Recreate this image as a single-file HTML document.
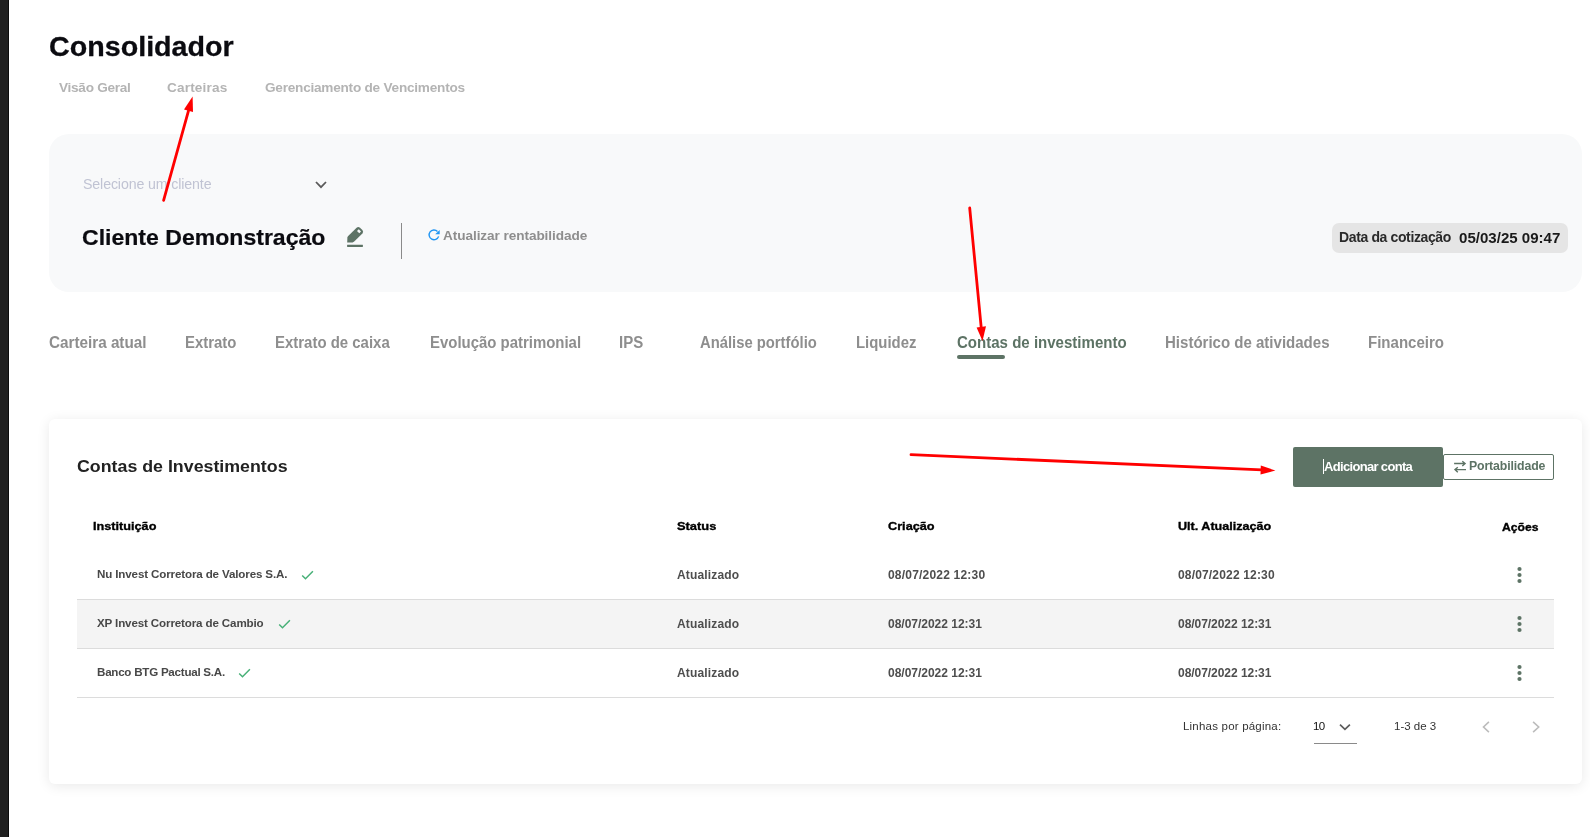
<!DOCTYPE html>
<html lang="pt-BR">
<head>
<meta charset="utf-8">
<title>Consolidador</title>
<style>
html,body{margin:0;padding:0;background:#fff;}
body{width:1590px;height:837px;position:relative;overflow:hidden;font-family:"Liberation Sans",sans-serif;}
.t{position:absolute;white-space:nowrap;font-family:"Liberation Sans",sans-serif;}
.abs{position:absolute;}
</style>
</head>
<body>
<!-- left dark bar -->
<div class="abs" style="left:0;top:0;width:8px;height:837px;background:#202020;"></div>
<div class="abs" style="left:8px;top:0;width:1px;height:837px;background:#0c0c0c;"></div>
<!-- client panel -->
<div class="abs" style="left:49px;top:134px;width:1533px;height:158px;background:#f8f9fa;border-radius:20px;"></div>
<!-- select chevron -->
<svg class="abs" style="left:313px;top:179.4px" width="16" height="12" viewBox="0 0 16 12"><path d="M3 3 L8 8.2 L13 3" fill="none" stroke="#5a5a5a" stroke-width="1.8" stroke-linecap="butt" stroke-linejoin="miter"/></svg>
<!-- pencil -->
<svg class="abs" style="left:340px;top:220px" width="30" height="32" viewBox="0 0 30 32"><path d="M7.2 22.6 L7.4 17.6 Q7.5 16.7 8.2 16 L16.6 7.7 Q18.3 6.2 20 7.7 L22.4 10.1 Q23.9 11.7 22.4 13.4 L14.2 21.6 Q13.5 22.3 12.6 22.4 Z" fill="#5d7365"/><path d="M17 11.1 L18.75 9.2 L21 11.5 L19.3 13.2 Z" fill="#f8f9fa"/><rect x="7.1" y="24.8" width="15.8" height="2.1" rx="0.3" fill="#5d7365"/></svg>
<!-- divider -->
<div class="abs" style="left:401px;top:223px;width:1px;height:36px;background:#8a8a8a;"></div>
<!-- refresh icon -->
<svg class="abs" style="left:427px;top:228px" width="14" height="14" viewBox="0 0 14 14"><path d="M10.5 3.4 A4.9 4.9 0 1 0 11.65 8.4" fill="none" stroke="#2196f3" stroke-width="1.4"/><path d="M12.7 2.1 L12.7 6.3 L8.2 6.3 Z" fill="#2196f3"/></svg>
<!-- date badge -->
<div class="abs" style="left:1332px;top:223px;width:236px;height:30px;background:#e5e5e5;border-radius:7px;"></div>
<!-- active tab underline -->
<div class="abs" style="left:957px;top:355px;width:48px;height:4px;background:#5d7365;border-radius:2px;"></div>
<!-- card -->
<div class="abs" style="left:49px;top:419px;width:1533px;height:365px;background:#fff;border-radius:6px;box-shadow:0 2px 13px rgba(0,0,0,0.09);"></div>
<!-- buttons -->
<div class="abs" style="left:1293px;top:447px;width:150px;height:40px;background:#5d7365;border-radius:2px;"></div>
<div class="abs" style="left:1323px;top:459px;width:1px;height:15px;background:#fff;"></div>
<div class="abs" style="left:1443px;top:454px;width:111px;height:26px;box-sizing:border-box;border:1px solid #5d7365;border-radius:2px;background:#fff;"></div>
<svg class="abs" style="left:1453px;top:460px" width="14" height="14" viewBox="0 0 14 14"><path d="M1.1 3.5 H12.3 M9.3 1.2 L12.1 3.5 L9.3 6" fill="none" stroke="#5d7365" stroke-width="1.4"/><path d="M13 9.6 H1.7 M4.8 7.3 L2 9.6 L4.8 12.2" fill="none" stroke="#5d7365" stroke-width="1.4"/></svg>
<!-- table rows -->
<div class="abs" style="left:77px;top:600px;width:1477px;height:48px;background:#f4f4f4;"></div>
<div class="abs" style="left:77px;top:599px;width:1477px;height:1px;background:#dcdcdc;"></div>
<div class="abs" style="left:77px;top:648px;width:1477px;height:1px;background:#dcdcdc;"></div>
<div class="abs" style="left:77px;top:697px;width:1477px;height:1px;background:#dcdcdc;"></div>
<!-- checks -->
<svg class="abs" style="left:300px;top:568px" width="16" height="14" viewBox="0 0 16 14"><path d="M2.2 7.45 L5.5 10.7 L12.9 3.3" fill="none" stroke="#47b077" stroke-width="1.5"/></svg>
<svg class="abs" style="left:276.8px;top:617px" width="16" height="14" viewBox="0 0 16 14"><path d="M2.2 7.45 L5.5 10.7 L12.9 3.3" fill="none" stroke="#47b077" stroke-width="1.5"/></svg>
<svg class="abs" style="left:237px;top:666px" width="16" height="14" viewBox="0 0 16 14"><path d="M2.2 7.45 L5.5 10.7 L12.9 3.3" fill="none" stroke="#47b077" stroke-width="1.5"/></svg>
<!-- dots -->
<svg class="abs" style="left:1514px;top:565px" width="10" height="20" viewBox="0 0 10 20"><circle cx="5.5" cy="4" r="2.1" fill="#5d7365"/><circle cx="5.5" cy="10" r="2.1" fill="#5d7365"/><circle cx="5.5" cy="16" r="2.1" fill="#5d7365"/></svg>
<svg class="abs" style="left:1514px;top:614px" width="10" height="20" viewBox="0 0 10 20"><circle cx="5.5" cy="4" r="2.1" fill="#5d7365"/><circle cx="5.5" cy="10" r="2.1" fill="#5d7365"/><circle cx="5.5" cy="16" r="2.1" fill="#5d7365"/></svg>
<svg class="abs" style="left:1514px;top:663px" width="10" height="20" viewBox="0 0 10 20"><circle cx="5.5" cy="4" r="2.1" fill="#5d7365"/><circle cx="5.5" cy="10" r="2.1" fill="#5d7365"/><circle cx="5.5" cy="16" r="2.1" fill="#5d7365"/></svg>
<!-- pagination -->
<svg class="abs" style="left:1337px;top:720px" width="16" height="14" viewBox="0 0 16 14"><path d="M3 4.7 L7.95 9.4 L12.9 4.7" fill="none" stroke="#5c5c5c" stroke-width="1.7"/></svg>
<div class="abs" style="left:1314px;top:743px;width:43px;height:1px;background:#8a8a8a;"></div>
<svg class="abs" style="left:1479px;top:719px" width="14" height="16" viewBox="0 0 14 16"><path d="M9.9 2.9 L4.5 8 L9.9 13.1" fill="none" stroke="#bcbcbc" stroke-width="1.6"/></svg>
<svg class="abs" style="left:1529px;top:719px" width="14" height="16" viewBox="0 0 14 16"><path d="M4.1 2.9 L9.7 8 L4.1 13.1" fill="none" stroke="#bcbcbc" stroke-width="1.6"/></svg>

<div id="tx" style="position:absolute;left:0;top:0;width:1590px;height:837px;will-change:transform;">
<span class="t" id="s0" style="left:49.00px;top:32.34px;font-size:28.3px;line-height:28.3px;font-weight:700;color:#0b0b10;letter-spacing:0.000px;-webkit-text-stroke:0.3px #0b0b10;transform:scaleX(1.0129);transform-origin:0 0;">Consolidador</span>
<span class="t" id="s1" style="left:59.00px;top:81.49px;font-size:13.6px;line-height:13.6px;font-weight:700;color:#b4b4b4;letter-spacing:-0.267px;">Visão Geral</span>
<span class="t" id="s2" style="left:167.00px;top:81.49px;font-size:13.6px;line-height:13.6px;font-weight:700;color:#b4b4b4;letter-spacing:0.165px;">Carteiras</span>
<span class="t" id="s3" style="left:265.00px;top:81.49px;font-size:13.6px;line-height:13.6px;font-weight:700;color:#b4b4b4;letter-spacing:-0.229px;">Gerenciamento de Vencimentos</span>
<span class="t" id="s4" style="left:83.00px;top:176.98px;font-size:14.2px;line-height:14.2px;font-weight:400;color:#c0c3d3;letter-spacing:-0.125px;">Selecione um cliente</span>
<span class="t" id="s5" style="left:82.00px;top:227.08px;font-size:22px;line-height:22px;font-weight:700;color:#0b0b10;letter-spacing:0.000px;-webkit-text-stroke:0.2px #0b0b10;transform:scaleX(1.0478);transform-origin:0 0;">Cliente Demonstração</span>
<span class="t" id="s6" style="left:443.00px;top:229.49px;font-size:13.6px;line-height:13.6px;font-weight:700;color:#8e8e8e;letter-spacing:-0.070px;">Atualizar rentabilidade</span>
<span class="t" id="s7" style="left:1339.00px;top:230.45px;font-size:14px;line-height:14px;font-weight:700;color:#2a2a2a;letter-spacing:-0.370px;">Data da cotização</span>
<span class="t" id="s8" style="left:1459.00px;top:231.15px;font-size:14px;line-height:14px;font-weight:700;color:#1a1a1a;letter-spacing:0.000px;transform:scaleX(1.0762);transform-origin:0 0;">05/03/25 09:47</span>
<span class="t" id="s9" style="left:49.00px;top:334.99px;font-size:15.6px;line-height:15.6px;font-weight:700;color:#8e8e8e;letter-spacing:0.000px;transform:scaleX(0.9781);transform-origin:0 0;">Carteira atual</span>
<span class="t" id="s10" style="left:185.00px;top:334.99px;font-size:15.6px;line-height:15.6px;font-weight:700;color:#8e8e8e;letter-spacing:0.000px;transform:scaleX(0.9569);transform-origin:0 0;">Extrato</span>
<span class="t" id="s11" style="left:275.00px;top:334.99px;font-size:15.6px;line-height:15.6px;font-weight:700;color:#8e8e8e;letter-spacing:0.000px;transform:scaleX(0.9590);transform-origin:0 0;">Extrato de caixa</span>
<span class="t" id="s12" style="left:430.00px;top:334.99px;font-size:15.6px;line-height:15.6px;font-weight:700;color:#8e8e8e;letter-spacing:0.000px;transform:scaleX(0.9578);transform-origin:0 0;">Evolução patrimonial</span>
<span class="t" id="s13" style="left:619.00px;top:334.99px;font-size:15.6px;line-height:15.6px;font-weight:700;color:#8e8e8e;letter-spacing:0.000px;transform:scaleX(0.9607);transform-origin:0 0;">IPS</span>
<span class="t" id="s14" style="left:700.00px;top:334.99px;font-size:15.6px;line-height:15.6px;font-weight:700;color:#8e8e8e;letter-spacing:0.000px;transform:scaleX(0.9493);transform-origin:0 0;">Análise portfólio</span>
<span class="t" id="s15" style="left:856.00px;top:334.99px;font-size:15.6px;line-height:15.6px;font-weight:700;color:#8e8e8e;letter-spacing:0.000px;transform:scaleX(0.9556);transform-origin:0 0;">Liquidez</span>
<span class="t" id="s16" style="left:957.00px;top:334.99px;font-size:15.6px;line-height:15.6px;font-weight:700;color:#5d7365;letter-spacing:0.000px;transform:scaleX(0.9645);transform-origin:0 0;">Contas de investimento</span>
<span class="t" id="s17" style="left:1165.00px;top:334.99px;font-size:15.6px;line-height:15.6px;font-weight:700;color:#8e8e8e;letter-spacing:0.000px;transform:scaleX(0.9636);transform-origin:0 0;">Histórico de atividades</span>
<span class="t" id="s18" style="left:1368.00px;top:334.99px;font-size:15.6px;line-height:15.6px;font-weight:700;color:#8e8e8e;letter-spacing:0.000px;transform:scaleX(0.9644);transform-origin:0 0;">Financeiro</span>
<span class="t" id="s19" style="left:77.00px;top:458.46px;font-size:17.3px;line-height:17.3px;font-weight:700;color:#222;letter-spacing:0.000px;transform:scaleX(1.0293);transform-origin:0 0;">Contas de Investimentos</span>
<span class="t" id="s20" style="left:1324.00px;top:459.80px;font-size:13px;line-height:13px;font-weight:700;color:#fff;letter-spacing:-0.672px;">Adicionar conta</span>
<span class="t" id="s21" style="left:1469.00px;top:460.39px;font-size:12.3px;line-height:12.3px;font-weight:700;color:#5d7365;letter-spacing:-0.125px;">Portabilidade</span>
<span class="t" id="s22" style="left:93.00px;top:521.27px;font-size:11.5px;line-height:11.5px;font-weight:700;color:#000;letter-spacing:0.000px;-webkit-text-stroke:0.35px #000;transform:scaleX(1.1021);transform-origin:0 0;">Instituição</span>
<span class="t" id="s23" style="left:677.00px;top:521.27px;font-size:11.5px;line-height:11.5px;font-weight:700;color:#000;letter-spacing:0.000px;-webkit-text-stroke:0.35px #000;transform:scaleX(1.1185);transform-origin:0 0;">Status</span>
<span class="t" id="s24" style="left:888.00px;top:521.27px;font-size:11.5px;line-height:11.5px;font-weight:700;color:#000;letter-spacing:0.000px;-webkit-text-stroke:0.35px #000;transform:scaleX(1.1045);transform-origin:0 0;">Criação</span>
<span class="t" id="s25" style="left:1178.00px;top:521.27px;font-size:11.5px;line-height:11.5px;font-weight:700;color:#000;letter-spacing:0.000px;-webkit-text-stroke:0.35px #000;transform:scaleX(1.0949);transform-origin:0 0;">Ult. Atualização</span>
<span class="t" id="s26" style="left:1502.00px;top:522.27px;font-size:11.5px;line-height:11.5px;font-weight:700;color:#000;letter-spacing:0.000px;-webkit-text-stroke:0.35px #000;transform:scaleX(1.0554);transform-origin:0 0;">Ações</span>
<span class="t" id="s27" style="left:97.00px;top:568.48px;font-size:11.6px;line-height:11.6px;font-weight:700;color:#484848;letter-spacing:-0.139px;">Nu Invest Corretora de Valores S.A.</span>
<span class="t" id="s28" style="left:677.00px;top:569.04px;font-size:12px;line-height:12px;font-weight:700;color:#4e4e4e;letter-spacing:0.154px;">Atualizado</span>
<span class="t" id="s29" style="left:888.00px;top:569.04px;font-size:12px;line-height:12px;font-weight:700;color:#4e4e4e;letter-spacing:0.199px;">08/07/2022 12:30</span>
<span class="t" id="s30" style="left:1178.00px;top:569.04px;font-size:12px;line-height:12px;font-weight:700;color:#4e4e4e;letter-spacing:0.167px;">08/07/2022 12:30</span>
<span class="t" id="s31" style="left:97.00px;top:617.48px;font-size:11.6px;line-height:11.6px;font-weight:700;color:#484848;letter-spacing:-0.138px;">XP Invest Corretora de Cambio</span>
<span class="t" id="s32" style="left:677.00px;top:618.04px;font-size:12px;line-height:12px;font-weight:700;color:#4e4e4e;letter-spacing:0.154px;">Atualizado</span>
<span class="t" id="s33" style="left:888.00px;top:618.04px;font-size:12px;line-height:12px;font-weight:700;color:#4e4e4e;letter-spacing:-0.012px;">08/07/2022 12:31</span>
<span class="t" id="s34" style="left:1178.00px;top:618.04px;font-size:12px;line-height:12px;font-weight:700;color:#4e4e4e;letter-spacing:-0.045px;">08/07/2022 12:31</span>
<span class="t" id="s35" style="left:97.00px;top:666.48px;font-size:11.6px;line-height:11.6px;font-weight:700;color:#484848;letter-spacing:-0.247px;">Banco BTG Pactual S.A.</span>
<span class="t" id="s36" style="left:677.00px;top:667.04px;font-size:12px;line-height:12px;font-weight:700;color:#4e4e4e;letter-spacing:0.154px;">Atualizado</span>
<span class="t" id="s37" style="left:888.00px;top:667.04px;font-size:12px;line-height:12px;font-weight:700;color:#4e4e4e;letter-spacing:-0.012px;">08/07/2022 12:31</span>
<span class="t" id="s38" style="left:1178.00px;top:667.04px;font-size:12px;line-height:12px;font-weight:700;color:#4e4e4e;letter-spacing:-0.045px;">08/07/2022 12:31</span>
<span class="t" id="s39" style="left:1183.00px;top:721.47px;font-size:11.5px;line-height:11.5px;font-weight:400;color:#333;letter-spacing:0.206px;">Linhas por página:</span>
<span class="t" id="s40" style="left:1313.00px;top:721.47px;font-size:11.5px;line-height:11.5px;font-weight:400;color:#111;letter-spacing:-0.716px;">10</span>
<span class="t" id="s41" style="left:1394.00px;top:721.47px;font-size:11.5px;line-height:11.5px;font-weight:400;color:#333;letter-spacing:-0.007px;">1-3 de 3</span>
</div>
<svg class="abs" style="left:0;top:0;pointer-events:none" width="1590" height="837" viewBox="0 0 1590 837">
<g stroke="#ff0000" stroke-width="2.8" stroke-linecap="round" fill="none">
<path d="M163.6 200.3 L188.6 110.3"/>
<path d="M969.7 208 L981.2 327.4"/>
<path d="M911 454.7 L1262 469.9"/>
</g>
<g fill="#ff0000">
<path d="M192.6 96.6 L184 109.5 L193 112.1 Z"/>
<path d="M982.5 340.9 L976.6 327.5 L986 326.2 Z"/>
<path d="M1275.4 470.5 L1260.8 465.5 L1260.5 474.5 Z"/>
</g>
</svg>

</body>
</html>
